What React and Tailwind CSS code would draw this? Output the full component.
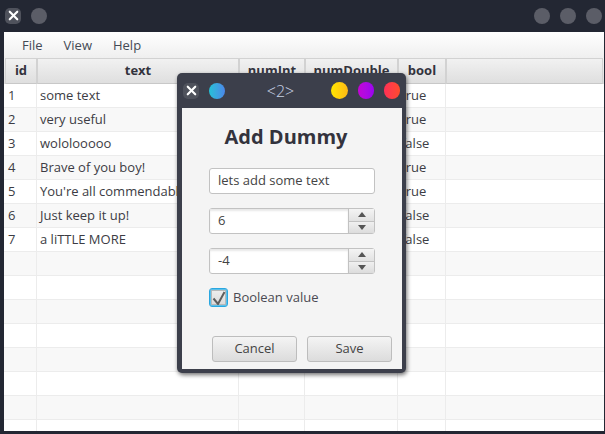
import React from 'react';
import { X } from 'lucide-react';

const rows = [
  { id: 1, text: 'some text', bool: 'true' },
  { id: 2, text: 'very useful', bool: 'true' },
  { id: 3, text: 'wololooooo', bool: 'false' },
  { id: 4, text: 'Brave of you boy!', bool: 'true' },
  { id: 5, text: "You're all commendable", bool: 'true' },
  { id: 6, text: 'Just keep it up!', bool: 'false' },
  { id: 7, text: 'a liTTLE MORE', bool: 'false' },
  {}, {}, {}, {}, {}, {}, {}, {},
];

// Window control: a white x on a rounded grey tile
const CloseButton = () => (
  <div className="w-[16px] h-[16px] rounded-[5px] bg-[#4f525c] flex items-center justify-center">
    <X className="w-[15px] h-[15px] text-white" strokeWidth={3.4} />
  </div>
);

const Dot = ({ className }) => <div className={`w-[16px] h-[16px] rounded-full ${className}`} />;

const HeaderCell = ({ className, children }) => (
  <div className={`h-full flex items-center justify-center border border-[#d2d2d2] border-b-[#c8c8c8] font-bold text-[#33333d] ${className}`}>
    {children}
  </div>
);

const Spinner = ({ value }) => (
  <div className="w-[166px] h-[26px] flex rounded-[3px] border border-[#c2c2c2] bg-white">
    <div className="flex-1 pl-[8px] flex items-center text-[#444] shadow-[inset_0_2px_2px_#e8e8e8]">{value}</div>
    <div className="w-[26px] flex flex-col border-l border-[#c2c2c2]">
      <div className="flex-1 flex items-center justify-center border-b border-[#c2c2c2] bg-gradient-to-b from-[#f4f4f4] to-[#e2e2e2]">
        <div className="w-0 h-0 border-x-[4px] border-x-transparent border-b-[5px] border-b-[#555]" />
      </div>
      <div className="flex-1 flex items-center justify-center bg-gradient-to-b from-[#f0f0f0] to-[#dcdcdc]">
        <div className="w-0 h-0 border-x-[4px] border-x-transparent border-t-[5px] border-t-[#555]" />
      </div>
    </div>
  </div>
);

const DialogButton = ({ children }) => (
  <div className="w-[85px] h-[26px] rounded-[3px] border border-[#bdbdbd] bg-gradient-to-b from-[#f4f4f4] to-[#dcdcdc] flex items-center justify-center text-[#444]">
    {children}
  </div>
);

export default function App() {
  return (
    <div className="relative w-[605px] h-[434px] overflow-hidden bg-[#232733] text-[13px] font-['Open_Sans','Noto_Sans',sans-serif]">
      {/* Main window title bar */}
      <div className="h-[32px] flex items-center pl-[5px] pr-[3px] pb-[1px]">
        <CloseButton />
        <Dot className="ml-[10px] bg-[#5b5d67]" />
        <div className="flex-1" />
        <div className="flex gap-[10px]">
          <Dot className="bg-[#5b5d67]" />
          <Dot className="bg-[#5b5d67]" />
          <Dot className="bg-[#5b5d67]" />
        </div>
      </div>

      <div className="ml-[4px] w-[600px] h-[399px] bg-white overflow-hidden">
        {/* Menu bar */}
        <div className="h-[26px] flex items-center pl-[18px] pt-[2px] gap-[21px] bg-gradient-to-b from-white to-[#efefef] text-[#444a55]">
          <span>File</span>
          <span>View</span>
          <span>Help</span>
        </div>

        {/* Table header */}
        <div className="h-[26px] flex bg-gradient-to-b from-[#f2f2f2] to-[#dedede]">
          <HeaderCell className="w-[32px] ml-[1px]">id</HeaderCell>
          <HeaderCell className="w-[202px]">text</HeaderCell>
          <HeaderCell className="w-[66px]">numInt</HeaderCell>
          <HeaderCell className="w-[93px]">numDouble</HeaderCell>
          <HeaderCell className="w-[48px]">bool</HeaderCell>
          <HeaderCell className="w-[157px]" />
        </div>

        {/* Table rows */}
        {rows.map((row, i) => (
          <div key={i} className={`h-[24px] flex border-b border-[#ececec] text-[#3c3c44] ${i % 2 === 0 ? 'bg-white' : 'bg-[#f8f8f8]'}`}>
            <div className="w-[33px] pl-[4px] flex items-center border-r border-[#ececec]">{row.id}</div>
            <div className="w-[202px] pl-[3px] flex items-center border-r border-[#ececec] whitespace-nowrap overflow-hidden">{row.text}</div>
            <div className="w-[66px] border-r border-[#ececec]" />
            <div className="w-[93px] border-r border-[#ececec]" />
            <div className="w-[48px] pl-[3px] flex items-center border-r border-[#ececec]">{row.bool}</div>
          </div>
        ))}
      </div>

      {/* Add Dummy dialog */}
      <div className="absolute left-[177px] top-[73px] w-[229px] h-[300px] flex flex-col rounded-[5px] bg-[#3c3f4b] shadow-[1px_2px_4px_rgba(0,0,0,0.55)]">
        <div className="h-[35px] flex items-center pl-[6px] pr-[6px]">
          <CloseButton />
          <Dot className="ml-[10px] bg-gradient-to-r from-[#22c1d6] to-[#4a86e8]" />
          <div className="flex-1 text-center text-[16px] font-light text-[#c9d2e4] pl-[5px]">&lt;2&gt;</div>
          <div className="flex gap-[10px]">
            <Dot className="w-[17px] h-[17px] bg-gradient-to-r from-[#ffe600] to-[#fdb813]" />
            <Dot className="h-[17px] bg-gradient-to-r from-[#c400d6] to-[#9a00f0]" />
            <Dot className="h-[17px] bg-gradient-to-r from-[#ff2f55] to-[#ff4b2b]" />
          </div>
        </div>
        <div className="ml-[5px] w-[220px] h-[261px] bg-[#f4f4f4] flex flex-col pl-[27px]">
          <div className="mt-[15px] -ml-[6px] w-[166px] text-center text-[20px] leading-[28px] font-bold text-[#33333d]">Add Dummy</div>
          <div className="mt-[17px] w-[166px] h-[26px] pl-[8px] flex items-center rounded-[3px] border border-[#c2c2c2] bg-white text-[#444]">lets add some text</div>
          <div className="mt-[14px]"><Spinner value="6" /></div>
          <div className="mt-[14px]"><Spinner value="-4" /></div>
          <div className="mt-[14px] flex items-center gap-[5px] text-[#4a4a52]">
            <div className="w-[19px] h-[19px] rounded-[3px] border border-[#2aa7e0] shadow-[inset_0_0_0_1px_#5cc0ea,inset_0_0_0_2px_#b8b8b8] bg-gradient-to-b from-[#f0f0f0] to-[#d8d8d8] flex items-center justify-center">
              <svg viewBox="0 0 14 14" className="w-[14px] h-[14px]" fill="none" stroke="#5e5e5e" strokeWidth="2">
                <path d="M1.5 7.5 L6 13 L12.5 1" />
              </svg>
            </div>
            <span>Boolean value</span>
          </div>
          <div className="mt-[28px] ml-[3px] flex gap-[10px]">
            <DialogButton>Cancel</DialogButton>
            <DialogButton>Save</DialogButton>
          </div>
        </div>
      </div>
    </div>
  );
}
